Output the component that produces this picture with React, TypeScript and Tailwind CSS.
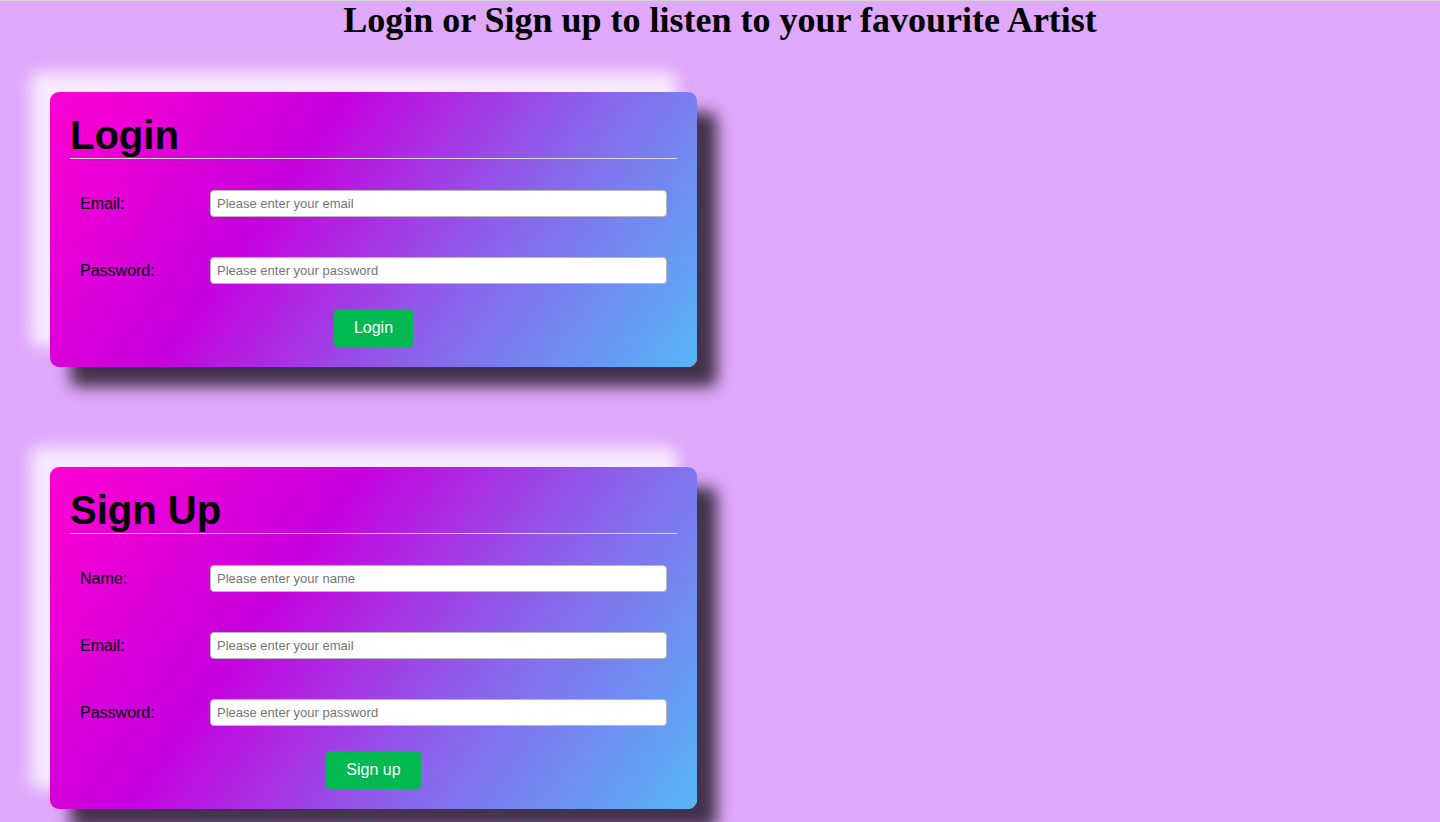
const fields = {
  login: [
    { label: "Email:", placeholder: "Please enter your email", type: "email" },
    { label: "Password:", placeholder: "Please enter your password", type: "password" },
  ],
  signup: [
    { label: "Name:", placeholder: "Please enter your name", type: "text" },
    { label: "Email:", placeholder: "Please enter your email", type: "email" },
    { label: "Password:", placeholder: "Please enter your password", type: "password" },
  ],
};

function FormCard({
  title,
  rows,
  action,
  className = "",
}: {
  title: string;
  rows: { label: string; placeholder: string; type: string }[];
  action: string;
  className?: string;
}) {
  return (
    <div
      className={`w-[647px] rounded-[9px] px-5 pt-5 pb-5 bg-[linear-gradient(125deg,#ff00d2_0%,#c700de_35%,#8b62ea_65%,#55b6f9_100%)] shadow-[20px_20px_15px_rgba(0,0,0,0.7),-20px_-20px_15px_rgba(255,255,255,0.75)] ${className}`}
    >
      <h2 className="text-[40px] font-bold leading-[46px] text-black border-b border-[#d8d8d8]">
        {title}
      </h2>
      <form className="mt-[31px] flex flex-col" onSubmit={(e) => e.preventDefault()}>
        <div className="flex flex-col gap-[40px]">
          {rows.map((row) => (
            <div key={row.label} className="flex items-center px-[10px]">
              <label className="w-[130px] shrink-0 text-base text-black">{row.label}</label>
              <input
                type={row.type}
                placeholder={row.placeholder}
                className="h-[27px] flex-1 rounded-[4px] border border-[#b8b8b8] bg-white px-[6px] text-[13px] text-black placeholder:text-[#757575] outline-none"
              />
            </div>
          ))}
        </div>
        <div className="mt-[25px] flex justify-center">
          <button
            type="submit"
            className="rounded-[4px] bg-[#00b950] px-5 py-[10px] text-base leading-[18px] text-white"
          >
            {action}
          </button>
        </div>
      </form>
    </div>
  );
}

export default function App() {
  return (
    <div className="min-h-screen border-t border-[#d4d4d4] bg-[#dfa8fb] font-['Liberation_Sans',Arial,sans-serif] pb-10">
      <h1 className="text-center font-['Liberation_Serif','Times_New_Roman',serif] text-[36px] font-bold leading-[38px] text-black">
        Login or Sign up to listen to your favourite Artist
      </h1>
      <div className="ml-[50px] mt-[53px] flex flex-col gap-[100px]">
        <FormCard title="Login" rows={fields.login} action="Login" />
        <FormCard title="Sign Up" rows={fields.signup} action="Sign up" />
      </div>
    </div>
  );
}
